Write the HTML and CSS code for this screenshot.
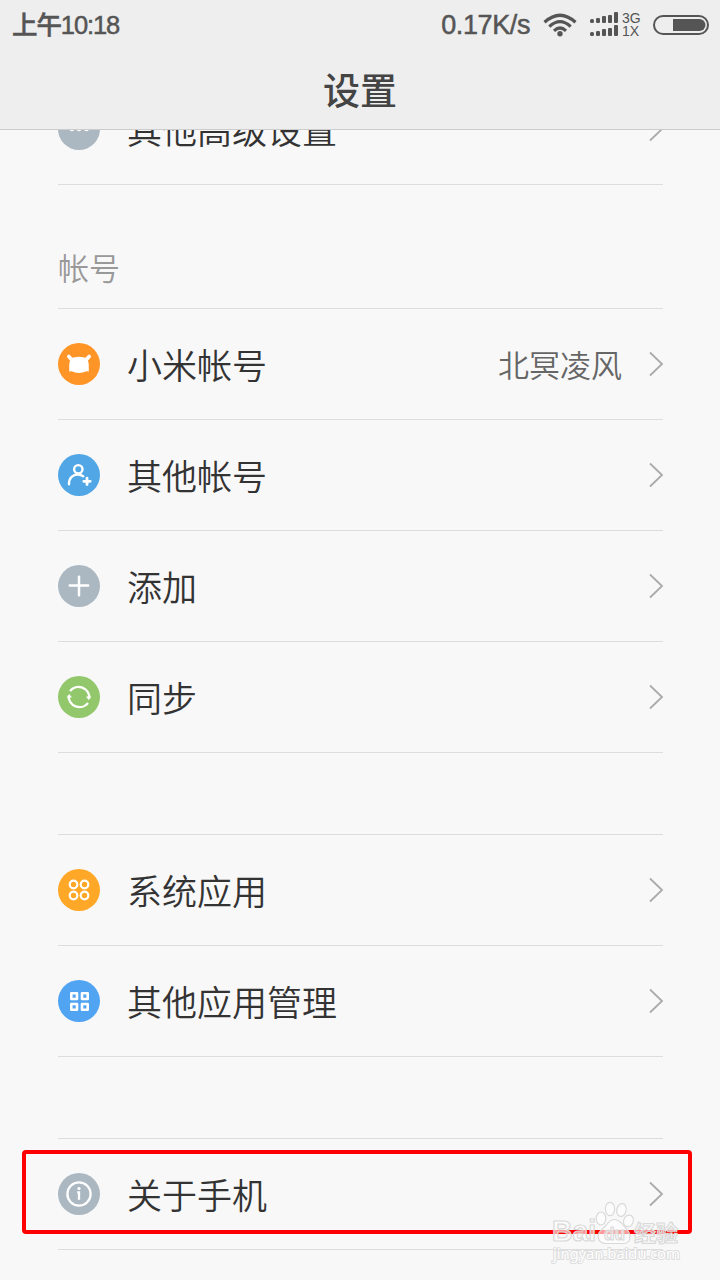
FILE: index.html
```html
<!DOCTYPE html>
<html lang="zh-CN">
<head>
    <meta charset="UTF-8">
    <title>设置</title>
    <link rel="stylesheet" href="styles.css">
</head>
<body>
<div id="container">
    <header class="header">
        <div class="status">
            <span class="time">上午10:18</span>
            <span class="speed">0.17K/s</span>
            <svg class="wifi" width="34" height="24" viewBox="0 0 34 24">
                <g fill="none" stroke="#555" stroke-width="3.2">
                    <path d="M1.500 9.300Q17 -4.800 32.500 9.300"/>
                    <path d="M6.300 13.600Q17 3.600 27.700 13.600"/>
                    <path d="M11 17.800Q17 12.200 23 17.800"/>
                </g>
                <circle cx="17" cy="20.800" r="2.700" fill="#555"/>
            </svg>
            <svg class="signal" width="28" height="26" viewBox="0 0 28 26" fill="#555">
                <rect x="0" y="7" width="4" height="4" rx="1.5"/>
                <rect x="6" y="6" width="4" height="5" rx="1.2"/>
                <rect x="12" y="4" width="4" height="7" rx="1"/>
                <rect x="18" y="3" width="4" height="8" rx="1"/>
                <rect x="24" y="0" width="4" height="11" rx="1"/>
                <rect x="0" y="20" width="4" height="4" rx="1.5"/>
                <rect x="6" y="19" width="4" height="5" rx="1.2"/>
                <rect x="12" y="17" width="4" height="7" rx="1"/>
                <rect x="18" y="16" width="4" height="8" rx="1"/>
                <rect x="24" y="13" width="4" height="11" rx="1"/>
            </svg>
            <span class="net"><span>3G</span><span>1X</span></span>
            <svg class="battery" width="56" height="20" viewBox="0 0 56 20">
                <rect x="1" y="1" width="54" height="18" rx="9" fill="none" stroke="#555" stroke-width="2"/>
                <path d="M20 4H46.500A6 6 0 0 1 46.500 16H20z" fill="#555"/>
            </svg>
        </div>
        <h1>设置</h1>
    </header>
    <div class="list">
        <ul>
            <li class="first">
                <svg class="icon" viewBox="0 0 42 42">
                    <circle cx="21" cy="21" r="21" fill="#abb8c2"/>
                    <g fill="#fff"><circle cx="14" cy="21" r="2.300"/><circle cx="21" cy="21" r="2.300"/><circle cx="28.500" cy="21" r="2.300"/></g>
                </svg>
                <span class="name">其他高级设置</span>
                <svg class="arrow" viewBox="0 0 16 26"><path d="M2 1.500L14 13L2 24.500"/></svg>
            </li>
        </ul>
        <h2>帐号</h2>
        <ul>
            <li>
                <svg class="icon" viewBox="0 0 42 42">
                    <circle cx="21" cy="21" r="21" fill="#ff9526"/>
                    <path d="M10.800 13.500L14 17M31.200 13.500L28 17" stroke="#fff" stroke-width="3.600" stroke-linecap="round"/>
                    <path d="M12.500 15.300Q21 12.300 29.500 15.300Q31.500 21 30.800 28.500L28.500 28.300Q21 31.500 13.500 28.300L11.200 28.500Q10.500 21 12.500 15.300z" fill="#fff"/>
                </svg>
                <span class="name">小米帐号</span>
                <span class="value">北冥凌风</span>
                <svg class="arrow" viewBox="0 0 16 26"><path d="M2 1.500L14 13L2 24.500"/></svg>
            </li>
            <li>
                <svg class="icon" viewBox="0 0 42 42">
                    <circle cx="21" cy="21" r="21" fill="#51a7e6"/>
                    <g fill="none" stroke="#fff" stroke-width="2.400" stroke-linecap="round">
                        <circle cx="20.300" cy="15.300" r="4.200"/>
                        <path d="M11 30.200C11 23.500 15 20.500 20 20.500C22.300 20.500 24 21.200 25.300 22.300"/>
                        <path d="M25.800 27.300H32.200M29 24.100V30.500" stroke-width="2.800"/>
                    </g>
                </svg>
                <span class="name">其他帐号</span>
                <svg class="arrow" viewBox="0 0 16 26"><path d="M2 1.500L14 13L2 24.500"/></svg>
            </li>
            <li>
                <svg class="icon" viewBox="0 0 42 42">
                    <circle cx="21" cy="21" r="21" fill="#abb8c2"/>
                    <path d="M11.800 20.500H30.200M21 11.800V30.200" stroke="#fff" stroke-width="2.500" stroke-linecap="round"/>
                </svg>
                <span class="name">添加</span>
                <svg class="arrow" viewBox="0 0 16 26"><path d="M2 1.500L14 13L2 24.500"/></svg>
            </li>
            <li>
                <svg class="icon" viewBox="0 0 42 42">
                    <circle cx="21" cy="21" r="21" fill="#92c76b"/>
                    <g fill="none" stroke="#fff" stroke-width="2.400">
                        <path d="M12 15.100A10.800 10.800 0 0 1 31.300 22.500"/>
                        <path d="M30 26.900A10.800 10.800 0 0 1 10.700 19.500"/>
                    </g>
                    <path d="M28 20.500L30.600 24L33.300 20.500zM14 21.500L11.400 18L8.700 21.500z" fill="#fff"/>
                </svg>
                <span class="name">同步</span>
                <svg class="arrow" viewBox="0 0 16 26"><path d="M2 1.500L14 13L2 24.500"/></svg>
            </li>
        </ul>
        <div class="space"></div>
        <ul>
            <li>
                <svg class="icon" viewBox="0 0 42 42">
                    <circle cx="21" cy="21" r="21" fill="#ffa726"/>
                    <g fill="none" stroke="#fff" stroke-width="2.200">
                        <circle cx="15.500" cy="15.500" r="3.800"/>
                        <circle cx="26.500" cy="15.500" r="3.800"/>
                        <circle cx="15.500" cy="26.500" r="3.800"/>
                        <circle cx="26.500" cy="26.500" r="3.800"/>
                    </g>
                </svg>
                <span class="name">系统应用</span>
                <svg class="arrow" viewBox="0 0 16 26"><path d="M2 1.500L14 13L2 24.500"/></svg>
            </li>
            <li>
                <svg class="icon" viewBox="0 0 42 42">
                    <circle cx="21" cy="21" r="21" fill="#51a4f2"/>
                    <g fill="none" stroke="#fff" stroke-width="2.600" stroke-linejoin="round">
                        <rect x="13.300" y="13.300" width="5.700" height="5.700"/>
                        <rect x="24" y="13.300" width="5.700" height="5.700"/>
                        <rect x="13.300" y="24" width="5.700" height="5.700"/>
                        <rect x="24" y="24" width="5.700" height="5.700"/>
                    </g>
                </svg>
                <span class="name">其他应用管理</span>
                <svg class="arrow" viewBox="0 0 16 26"><path d="M2 1.500L14 13L2 24.500"/></svg>
            </li>
        </ul>
        <div class="space"></div>
        <ul>
            <li>
                <svg class="icon" viewBox="0 0 42 42">
                    <circle cx="21" cy="21" r="21" fill="#abb8c2"/>
                    <circle cx="21" cy="21" r="11.600" fill="none" stroke="#fff" stroke-width="2.300"/>
                    <circle cx="21" cy="15.500" r="1.600" fill="#fff"/>
                    <path d="M19.200 19.400H21V26.800" fill="none" stroke="#fff" stroke-width="2.300"/>
                </svg>
                <span class="name">关于手机</span>
                <svg class="arrow" viewBox="0 0 16 26"><path d="M2 1.500L14 13L2 24.500"/></svg>
            </li>
        </ul>
    </div>
    <div class="mark"></div>
    <!-- 水印 -->
    <svg class="watermark" width="140" height="72" viewBox="0 0 140 72">
        <g class="outline">
            <ellipse cx="21" cy="26.500" rx="4.800" ry="6.500"/>
            <ellipse cx="30" cy="17" rx="4.600" ry="6.700"/>
            <ellipse cx="41.500" cy="18" rx="4.700" ry="6.500" transform="rotate(12 41.500 18)"/>
            <ellipse cx="48.500" cy="29" rx="4.800" ry="6" transform="rotate(20 48.500 29)"/>
            <path d="M34.500 27.500C40 27.500 43 33 46.500 37C52 43 51 51.500 43 51.500H26C17 51.500 16 42 22 37.500C27 33.500 28.500 27.500 34.500 27.500z"/>
        </g>
        <g class="outline word">
            <text x="-28" y="49" font-size="29" textLength="44" lengthAdjust="spacingAndGlyphs">Bai</text>
            <text x="24" y="48" font-size="19" textLength="21" lengthAdjust="spacingAndGlyphs">du</text>
            <text x="54" y="49" font-size="22" textLength="44">经验</text>
        </g>
        <text class="site" x="-27" y="67" textLength="127">jingyan.baidu.com</text>
    </svg>
</div>
</body>
</html>
```
FILE: styles.css
```css
* {
    margin: 0;
    padding: 0;
    box-sizing: border-box;
}

body {
    background: #f8f8f8;
    font-family: "Noto Sans CJK SC", sans-serif;
}

#container {
    position: relative;
    width: 720px;
    height: 1280px;
    overflow: hidden;
}

.header {
    height: 130px;
    background: #eee;
    border-bottom: 1px solid #ccc;
}

.status {
    display: flex;
    align-items: center;
    height: 50px;
    padding: 0 11px 0 12px;
    color: #555;
    font-family: "Liberation Sans", "Noto Sans CJK SC", sans-serif;
    font-size: 27px;
    line-height: 50px;
}

.time {
    flex: 1;
    font-size: 25.5px;
    font-weight: 500;
    letter-spacing: -1.1px;
    -webkit-text-stroke: 0.5px #555;
}

.speed {
    margin-right: 13px;
    letter-spacing: -0.4px;
    -webkit-text-stroke: 0.5px #555;
}

.wifi {
    margin-right: 13px;
}

.signal {
    margin-right: 4px;
}

.net {
    display: flex;
    flex-direction: column;
    width: 19px;
    margin-right: 12px;
    font-size: 14px;
    line-height: 13px;
}

h1 {
    height: 79px;
    color: #444;
    font-size: 37px;
    font-weight: 500;
    line-height: 79px;
    text-align: center;
}

.list {
    height: 1150px;
    padding: 0 57px 0 58px;
    overflow: hidden;
}

li {
    display: flex;
    align-items: center;
    height: 111px;
    border-bottom: 1px solid #ddd;
    list-style-type: none;
}

/* 第一行滚动到标题栏下面 */
.first {
    margin-top: -56px;
}

h2 {
    height: 124px;
    padding-top: 60px;
    border-bottom: 1px solid #ddd;
    color: #999;
    font-size: 31px;
    font-weight: 350;
    line-height: 44px;
}

.space {
    height: 82px;
    border-bottom: 1px solid #ddd;
}

.icon {
    width: 42px;
    height: 42px;
    margin-right: 27px;
}

.name {
    flex: 1;
    color: #333;
    font-size: 35px;
    font-weight: 350;
    line-height: 50px;
}

.value {
    margin-right: 26px;
    padding-bottom: 2px;
    color: #666;
    font-size: 31px;
    font-weight: 350;
}

.arrow {
    width: 16px;
    height: 26px;
    margin-right: -1px;
    fill: none;
    stroke: #aaa;
    stroke-width: 1.8;
}

.mark {
    position: absolute;
    left: 22px;
    top: 1150px;
    width: 670px;
    height: 84px;
    border: 4px solid #f00;
    border-radius: 4px;
}

.watermark {
    position: absolute;
    left: 580px;
    top: 1192px;
    overflow: visible;
}

.outline {
    fill: #fff;
    fill-opacity: 0.6;
    stroke: #d9d9d9;
    stroke-width: 1.2;
}

.word {
    font-family: "Liberation Sans", "Noto Sans CJK SC", sans-serif;
    font-weight: bold;
}

.site {
    fill: #fff;
    stroke: #ddd;
    stroke-width: 2;
    paint-order: stroke;
    font-family: "Noto Sans", sans-serif;
    font-size: 15px;
}
```
